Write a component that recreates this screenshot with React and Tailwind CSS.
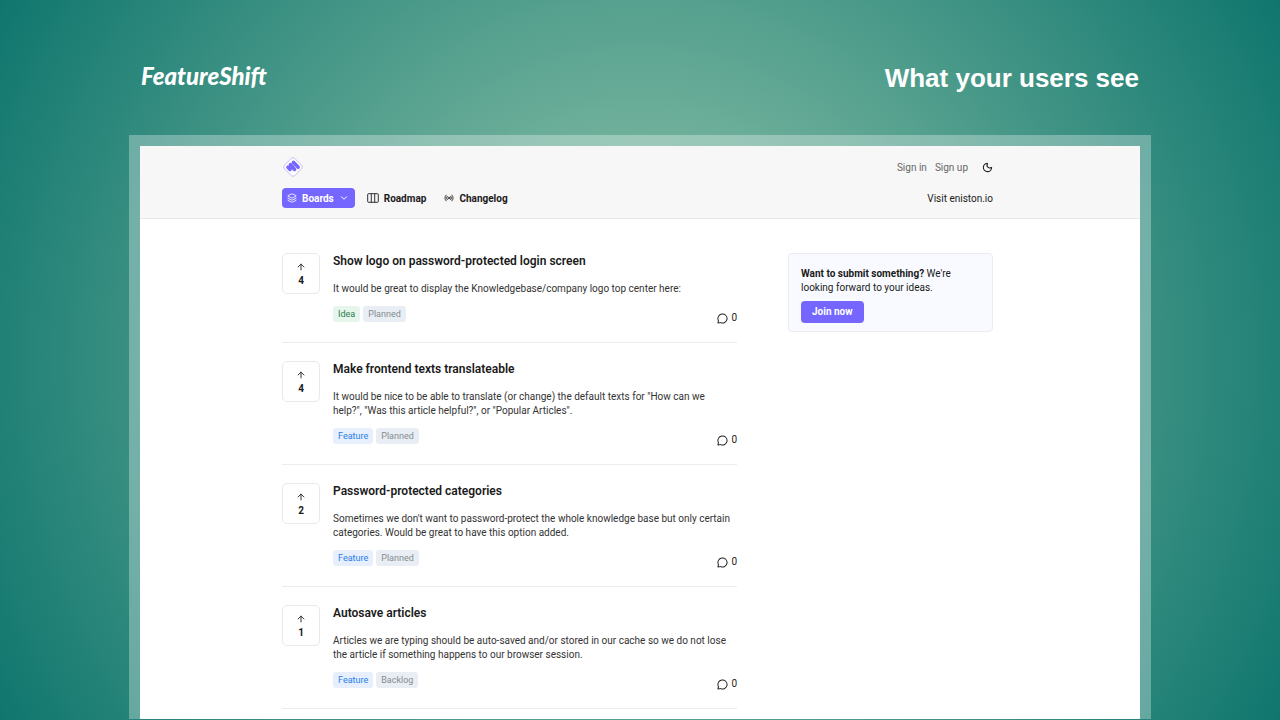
import { ArrowUp, ChevronDown, Layers, MessageCircle, Moon, Radio } from 'lucide-react';

const posts = [
  {
    title: 'Show logo on password-protected login screen',
    body: 'It would be great to display the Knowledgebase/company logo top center here:',
    votes: 4,
    type: 'Idea',
    status: 'Planned',
  },
  {
    title: 'Make frontend texts translateable',
    body: 'It would be nice to be able to translate (or change) the default texts for "How can we help?", "Was this article helpful?", or "Popular Articles".',
    votes: 4,
    type: 'Feature',
    status: 'Planned',
  },
  {
    title: 'Password-protected categories',
    body: "Sometimes we don't want to password-protect the whole knowledge base but only certain categories. Would be great to have this option added.",
    votes: 2,
    type: 'Feature',
    status: 'Planned',
  },
  {
    title: 'Autosave articles',
    body: 'Articles we are typing should be auto-saved and/or stored in our cache so we do not lose the article if something happens to our browser session.',
    votes: 1,
    type: 'Feature',
    status: 'Backlog',
  },
];

const typeStyles = {
  Idea: 'bg-[#e6f6ed] text-[#2c7a51]',
  Feature: 'bg-[#e6effb] text-[#2680eb]',
};

function BrandMark() {
  return (
    <svg viewBox="0 0 22 22" className="size-[22px]" aria-hidden="true">
      <rect x="3.7" y="3.7" width="14.6" height="14.6" rx="2.6" transform="rotate(45 11 11)" fill="#fff" stroke="#b9b1fa" strokeWidth="0.8" />
      <g stroke="#7566ff" strokeWidth="3.5" strokeLinecap="round">
        <path d="M5.9 11.2l2.2 2.3M8.4 8.5l4.2 5M11.4 6.3l4.8 4.9" />
      </g>
    </svg>
  );
}

function BoardColumns() {
  return (
    <svg viewBox="0 0 12 12" className="size-3" fill="none" stroke="currentColor" strokeWidth="0.9" aria-hidden="true">
      <rect x="0.7" y="1.7" width="10.6" height="8.6" rx="0.8" />
      <path d="M4.3 1.7v8.6M7.7 1.7v8.6" />
    </svg>
  );
}

function Post({ post }) {
  return (
    <article className="flex gap-[13px] border-b border-[#ececec] pt-[18px] pb-4">
      <button
        type="button"
        aria-label={`Upvote ${post.title}`}
        className="flex h-[41px] w-[38px] shrink-0 flex-col items-center justify-center gap-[3px] rounded-[5px] border border-[#e9e9e9] pt-px text-[10px] leading-3 font-bold"
      >
        <ArrowUp className="size-2.5 text-[#333]" strokeWidth={2.4} />
        {post.votes}
      </button>
      <div className="min-w-0 flex-1">
        <h2 className="text-[12px] leading-4 font-semibold">{post.title}</h2>
        <p className="mt-[13px] pr-[3px] text-[10px] leading-[14px] text-[#333]">{post.body}</p>
        <div className="mt-2.5 flex items-start justify-between">
          <div className="flex gap-[3px] text-[9px] leading-4">
            <span className={`rounded-[3px] px-[5px] ${typeStyles[post.type]}`}>{post.type}</span>
            <span className="rounded-[3px] bg-[#e9eef4] px-[5px] text-[#868b91]">{post.status}</span>
          </div>
          <span className="mt-1 flex h-4 items-center gap-[3px] text-[10px] leading-4 text-[#222]">
            <MessageCircle className="size-[11px]" strokeWidth={2.2} />0
          </span>
        </div>
      </div>
    </article>
  );
}

export default function App() {
  return (
    <div className="flex h-screen flex-col overflow-hidden bg-[radial-gradient(circle_at_center,#99c9ae,#0f766e)] px-[129px] pb-px font-['Roboto',sans-serif] text-[#1a1a1a]">
      <header className="flex h-[135px] shrink-0 items-start justify-between px-3 pt-[60px] text-white">
        <a href="#home" className="font-['Lato',sans-serif] text-[24px] leading-8 font-black italic">FeatureShift</a>
        <h1 className="font-['Liberation_Sans',sans-serif] text-[26px] leading-9 font-bold">What your users see</h1>
      </header>

      <main className="min-h-0 flex-1 bg-white/30 px-[11px] pt-[11px]">
        <div className="h-full overflow-hidden bg-white">
          <div className="border-b border-[#e8e8e8] bg-[#f7f7f7] pt-2.5 pr-[147px] pb-2.5 pl-[142px]">
            <div className="flex h-[22px] items-center justify-between">
              <a href="#boards" aria-label="Eniston"><BrandMark /></a>
              <div className="flex items-center gap-2 text-[10px] text-[#666]">
                <a href="#signin">Sign in</a>
                <a href="#signup">Sign up</a>
                <button type="button" aria-label="Toggle dark mode" className="ml-1.5 text-[#222]">
                  <Moon className="size-[11px]" strokeWidth={2.4} />
                </button>
              </div>
            </div>
            <nav className="mt-2.5 flex h-5 items-center text-[10px] font-bold">
              <button type="button" className="flex h-5 items-center gap-[5px] rounded-sm bg-[#7566ff] pr-1.5 pl-[5px] text-white">
                <Layers className="size-2.5" />
                Boards
                <ChevronDown className="size-2.5" strokeWidth={2.4} />
              </button>
              <a href="#roadmap" className="ml-3 flex items-center gap-[5px]"><BoardColumns />Roadmap</a>
              <a href="#changelog" className="ml-[18px] flex items-center gap-[5px]"><Radio className="size-2.5" />Changelog</a>
              <a href="#visit" className="ml-auto font-normal">Visit eniston.io</a>
            </nav>
          </div>

          <div className="flex items-start justify-between pt-4 pr-[147px] pl-[142px]">
            <section className="w-[455px]">
              {posts.map((post) => <Post key={post.title} post={post} />)}
            </section>
            <aside className="mt-[18px] w-[205px] rounded-sm border border-[#ebebf0] bg-[#f9faff] px-3 pt-[13px] pb-2 text-[10px] leading-[14px]">
              <p><strong className="font-bold">Want to submit something?</strong> We're looking forward to your ideas.</p>
              <button type="button" className="mt-1.5 h-[22px] rounded-sm bg-[#7566ff] px-[11px] font-bold text-white">Join now</button>
            </aside>
          </div>
        </div>
      </main>
    </div>
  );
}
